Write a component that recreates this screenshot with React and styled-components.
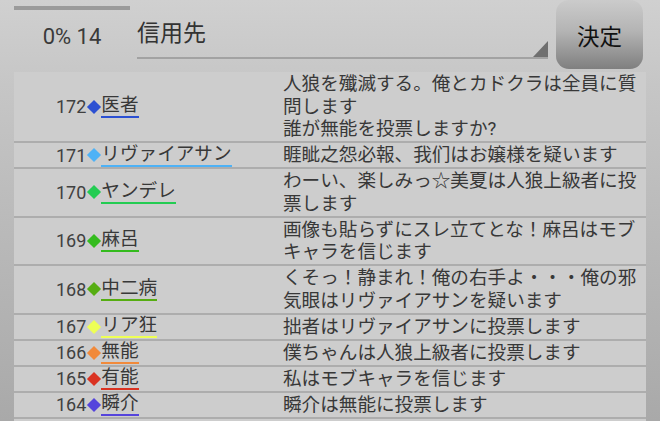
import React from "react";
import styled, { createGlobalStyle } from "styled-components";

const GlobalStyle = createGlobalStyle`
  html, body {
    margin: 0;
    padding: 0;
  }
  body {
    font-family: "Roboto", "Noto Sans CJK JP", sans-serif;
  }
`;

const Screen = styled.div`
  width: 660px;
  height: 421px;
  overflow: hidden;
  background: linear-gradient(#d0d0d0, #c6c6c6 20%, #a9a9a9);
  display: flex;
  flex-direction: column;
`;

const Header = styled.div`
  height: 72px;
  flex: none;
  display: flex;
  align-items: flex-start;
  padding: 0 17px 0 14px;
  box-sizing: border-box;
`;

const Status = styled.div`
  width: 116px;
  display: flex;
  flex-direction: column;
  align-items: center;
`;

const Progress = styled.div`
  width: 100%;
  height: 4px;
  margin-top: 6px;
  background: #9b9b9b;
`;

const Count = styled.div`
  margin-top: 14px;
  font-size: 22px;
  line-height: 26px;
  color: #3a3a3a;
`;

const Select = styled.div`
  position: relative;
  flex: 1;
  margin-left: 7px;
  height: 59px;
  padding-top: 5px;
  box-sizing: border-box;
  display: flex;
  align-items: center;
  border-bottom: 2px solid #a2a2a2;
  font-size: 23px;
  color: #333;

  &::after {
    content: "";
    position: absolute;
    right: 0;
    bottom: 0;
    width: 0;
    height: 0;
    border-left: 15px solid transparent;
    border-bottom: 16px solid #6f6f6f;
  }
`;

const Button = styled.button`
  margin-left: 8px;
  width: 87px;
  height: 69px;
  border: none;
  border-radius: 13px;
  background: linear-gradient(#cbcbcb, #b4b4b4 45%, #7f7f7f);
  font-family: inherit;
  font-size: 22.5px;
  color: #111;
  padding: 0;
  cursor: pointer;
`;

const Panel = styled.div`
  flex: 1;
  margin: 0 14px;
  background: #cdcdcd;
`;

const Row = styled.div`
  display: grid;
  grid-template-columns: 269px 1fr;
  border-bottom: 2px solid #adadad;
  color: #383838;
`;

const Speaker = styled.div`
  display: flex;
  align-items: center;
  padding-left: 42px;
`;

const Num = styled.span`
  font-size: 18px;
  color: #404040;
`;

const Diamond = styled.span`
  display: inline-block;
  width: 10px;
  height: 10px;
  margin: 0 2px 0 3px;
  transform: rotate(45deg);
  background: ${({ color }) => color};
`;

const Name = styled.span`
  display: inline-block;
  font-size: 18.6px;
  line-height: 21px;
  border-bottom: 2px solid ${({ color }) => color};
`;

const Message = styled.div`
  font-size: 18.6px;
  line-height: 22.5px;
  padding: 1px 4px 0.5px 0;
  white-space: pre-line;
`;

const logs = [
  {
    no: 172,
    name: "医者",
    color: "#2c50d2",
    text: "人狼を殲滅する。俺とカドクラは全員に質問します\n誰が無能を投票しますか?",
  },
  { no: 171, name: "リヴァイアサン", color: "#4eb2f6", text: "睚眦之怨必報、我们はお嬢様を疑います" },
  { no: 170, name: "ヤンデレ", color: "#23cc52", text: "わーい、楽しみっ☆美夏は人狼上級者に投票します" },
  { no: 169, name: "麻呂", color: "#34bb1e", text: "画像も貼らずにスレ立てとな！麻呂はモブキャラを信じます" },
  { no: 168, name: "中二病", color: "#56ad12", text: "くそっ！静まれ！俺の右手よ・・・俺の邪気眼はリヴァイアサンを疑います" },
  { no: 167, name: "リア狂", color: "#eeff55", text: "拙者はリヴァイアサンに投票します" },
  { no: 166, name: "無能", color: "#f18a3b", text: "僕ちゃんは人狼上級者に投票します" },
  { no: 165, name: "有能", color: "#da3322", text: "私はモブキャラを信じます" },
  { no: 164, name: "瞬介", color: "#5544dc", text: "瞬介は無能に投票します" },
];

export default function App() {
  return (
    <>
      <GlobalStyle />
      <Screen>
        <Header>
          <Status>
            <Progress />
            <Count>0% 14</Count>
          </Status>
          <Select>信用先</Select>
          <Button>決定</Button>
        </Header>
        <Panel>
          {logs.map((log) => (
            <Row key={log.no}>
              <Speaker>
                <Num>{log.no}</Num>
                <Diamond color={log.color} />
                <Name color={log.color}>{log.name}</Name>
              </Speaker>
              <Message>{log.text}</Message>
            </Row>
          ))}
        </Panel>
      </Screen>
    </>
  );
}
